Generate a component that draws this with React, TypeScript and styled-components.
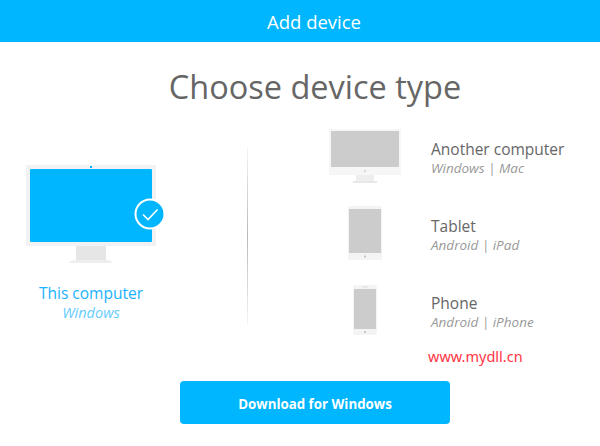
import React from "react";
import styled, { createGlobalStyle } from "styled-components";

const GlobalStyle = createGlobalStyle`
  html, body {
    margin: 0;
    padding: 0;
    background: #fff;
    font-family: "Open Sans", "Noto Sans", "Liberation Sans", sans-serif;
  }
`;

const Page = styled.div`
  position: relative;
  width: 600px;
  height: 446px;
  overflow: hidden;
  background: #fff;
`;

const Header = styled.header`
  height: 42px;
  padding-left: 28px;
  line-height: 44px;
  background: #00b7ff;
  color: #fff;
  font-size: 18.5px;
  text-align: center;
`;

const Title = styled.h1`
  margin: 22px 0 0;
  padding-left: 30px;
  height: 45px;
  line-height: 45px;
  font-size: 32.5px;
  font-weight: 400;
  color: #666;
  text-align: center;
`;

const Chooser = styled.div`
  display: flex;
  height: 268px;
`;

const Current = styled.div`
  display: flex;
  flex-direction: column;
  align-items: center;
  width: 182px;
  padding-top: 56px;
  box-sizing: border-box;
`;

const Screen = styled.div`
  position: relative;
  width: 130px;
  height: 98px;
`;

const Badge = styled.svg`
  position: absolute;
  left: 108px;
  top: 33px;
`;

const CurrentName = styled.div`
  margin-top: 20px;
  font-size: 15.5px;
  line-height: 21px;
  color: #1ab2ff;
`;

const CurrentOs = styled.div`
  font-size: 14.5px;
  line-height: 18px;
  font-style: italic;
  color: #66ccff;
`;

const Divider = styled.div`
  width: 1px;
  height: 176px;
  margin: 39px 0 0 65px;
  background: linear-gradient(to bottom, #f4f4f4, #b8b8b8 50%, #f4f4f4);
`;

const Options = styled.div`
  display: flex;
  flex-direction: column;
  margin-left: 61px;
  padding-top: 10px;
`;

const Option = styled.div`
  display: flex;
  align-items: center;
  height: 77px;
`;

const IconSlot = styled.div`
  display: flex;
  justify-content: center;
  width: 112px;
  margin: 0 10px 4px 0;
`;

const OptionName = styled.div`
  font-size: 15.5px;
  font-weight: 500;
  line-height: 20px;
  color: #666;
`;

const OptionOs = styled.div`
  font-size: 13.5px;
  font-style: italic;
  line-height: 18px;
  color: #999;
`;

const Footer = styled.div`
  display: flex;
  justify-content: center;
  padding-left: 30px;
  margin-top: 4px;
`;

const DownloadButton = styled.button`
  width: 270px;
  height: 43px;
  padding: 2px 0 0;
  border: 0;
  border-radius: 4px;
  background: #00b7ff;
  color: #fff;
  font-family: inherit;
  font-size: 13.3px;
  font-weight: 700;
  cursor: pointer;
`;

const Watermark = styled.div`
  position: absolute;
  left: 428px;
  top: 346px;
  font-family: "Noto Sans", sans-serif;
  font-size: 14.5px;
  line-height: 20px;
  color: #ff3344;
`;

const BigMonitor = () => (
  <svg width="130" height="98" viewBox="0 0 130 98">
    <rect x="0" y="0" width="130" height="81" rx="1" fill="#f2f2f2" />
    <rect x="4" y="4" width="122" height="73" rx="1" fill="#00b7ff" />
    <rect x="64" y="1" width="2" height="2" fill="#00b7ff" />
    <rect x="50" y="81" width="30" height="14" fill="#e6e6e6" />
    <path d="M43 98c1-2 4-3 7-3h30c3 0 6 1 7 3z" fill="#eeeeee" />
  </svg>
);

const SmallMonitor = () => (
  <svg width="72" height="54" viewBox="0 0 72 54">
    <rect x="0" y="0" width="72" height="46" fill="#f6f6f6" />
    <rect x="2" y="2" width="68" height="36" fill="#cccccc" />
    <circle cx="36" cy="42" r="1" fill="#cccccc" />
    <rect x="27" y="46" width="18" height="6" fill="#eeeeee" />
    <rect x="24" y="52" width="24" height="2" fill="#e8e8e8" />
  </svg>
);

const TabletIcon = () => (
  <svg width="34" height="54" viewBox="0 0 34 54">
    <rect x="0" y="0" width="34" height="54" rx="1" fill="#f4f4f4" />
    <rect x="1" y="3" width="32" height="44" fill="#cccccc" />
    <circle cx="17" cy="50.5" r="1" fill="#bbbbbb" />
  </svg>
);

const PhoneIcon = () => (
  <svg width="24" height="50" viewBox="0 0 24 50">
    <rect x="0" y="0" width="24" height="50" rx="2" fill="#f4f4f4" />
    <rect x="1" y="4" width="22" height="40" fill="#cccccc" />
    <rect x="9" y="1.5" width="6" height="1" fill="#dddddd" />
    <circle cx="12" cy="47" r="1" fill="#bbbbbb" />
  </svg>
);

const devices = [
  { name: "Another computer", os: "Windows | Mac", icon: <SmallMonitor /> },
  { name: "Tablet", os: "Android | iPad", icon: <TabletIcon /> },
  { name: "Phone", os: "Android | iPhone", icon: <PhoneIcon /> },
];

const App: React.FC = () => {
  return (
    <Page>
      <GlobalStyle />
      <Header>Add device</Header>
      <Title>Choose device type</Title>
      <Chooser>
        <Current>
          <Screen>
            <BigMonitor />
            <Badge width="32" height="32" viewBox="0 0 32 32">
              <circle cx="16" cy="16" r="14.5" fill="#00b7ff" stroke="#fff" strokeWidth="2" />
              <path d="M9 16.5l5 5 9.5-10" fill="none" stroke="#fff" strokeWidth="1.6" />
            </Badge>
          </Screen>
          <CurrentName>This computer</CurrentName>
          <CurrentOs>Windows</CurrentOs>
        </Current>
        <Divider />
        <Options>
          {devices.map((device) => (
            <Option key={device.name}>
              <IconSlot>{device.icon}</IconSlot>
              <div>
                <OptionName>{device.name}</OptionName>
                <OptionOs>{device.os}</OptionOs>
              </div>
            </Option>
          ))}
        </Options>
      </Chooser>
      <Footer>
        <DownloadButton>Download for Windows</DownloadButton>
      </Footer>
      <Watermark>www.mydll.cn</Watermark>
    </Page>
  );
};

export default App;
